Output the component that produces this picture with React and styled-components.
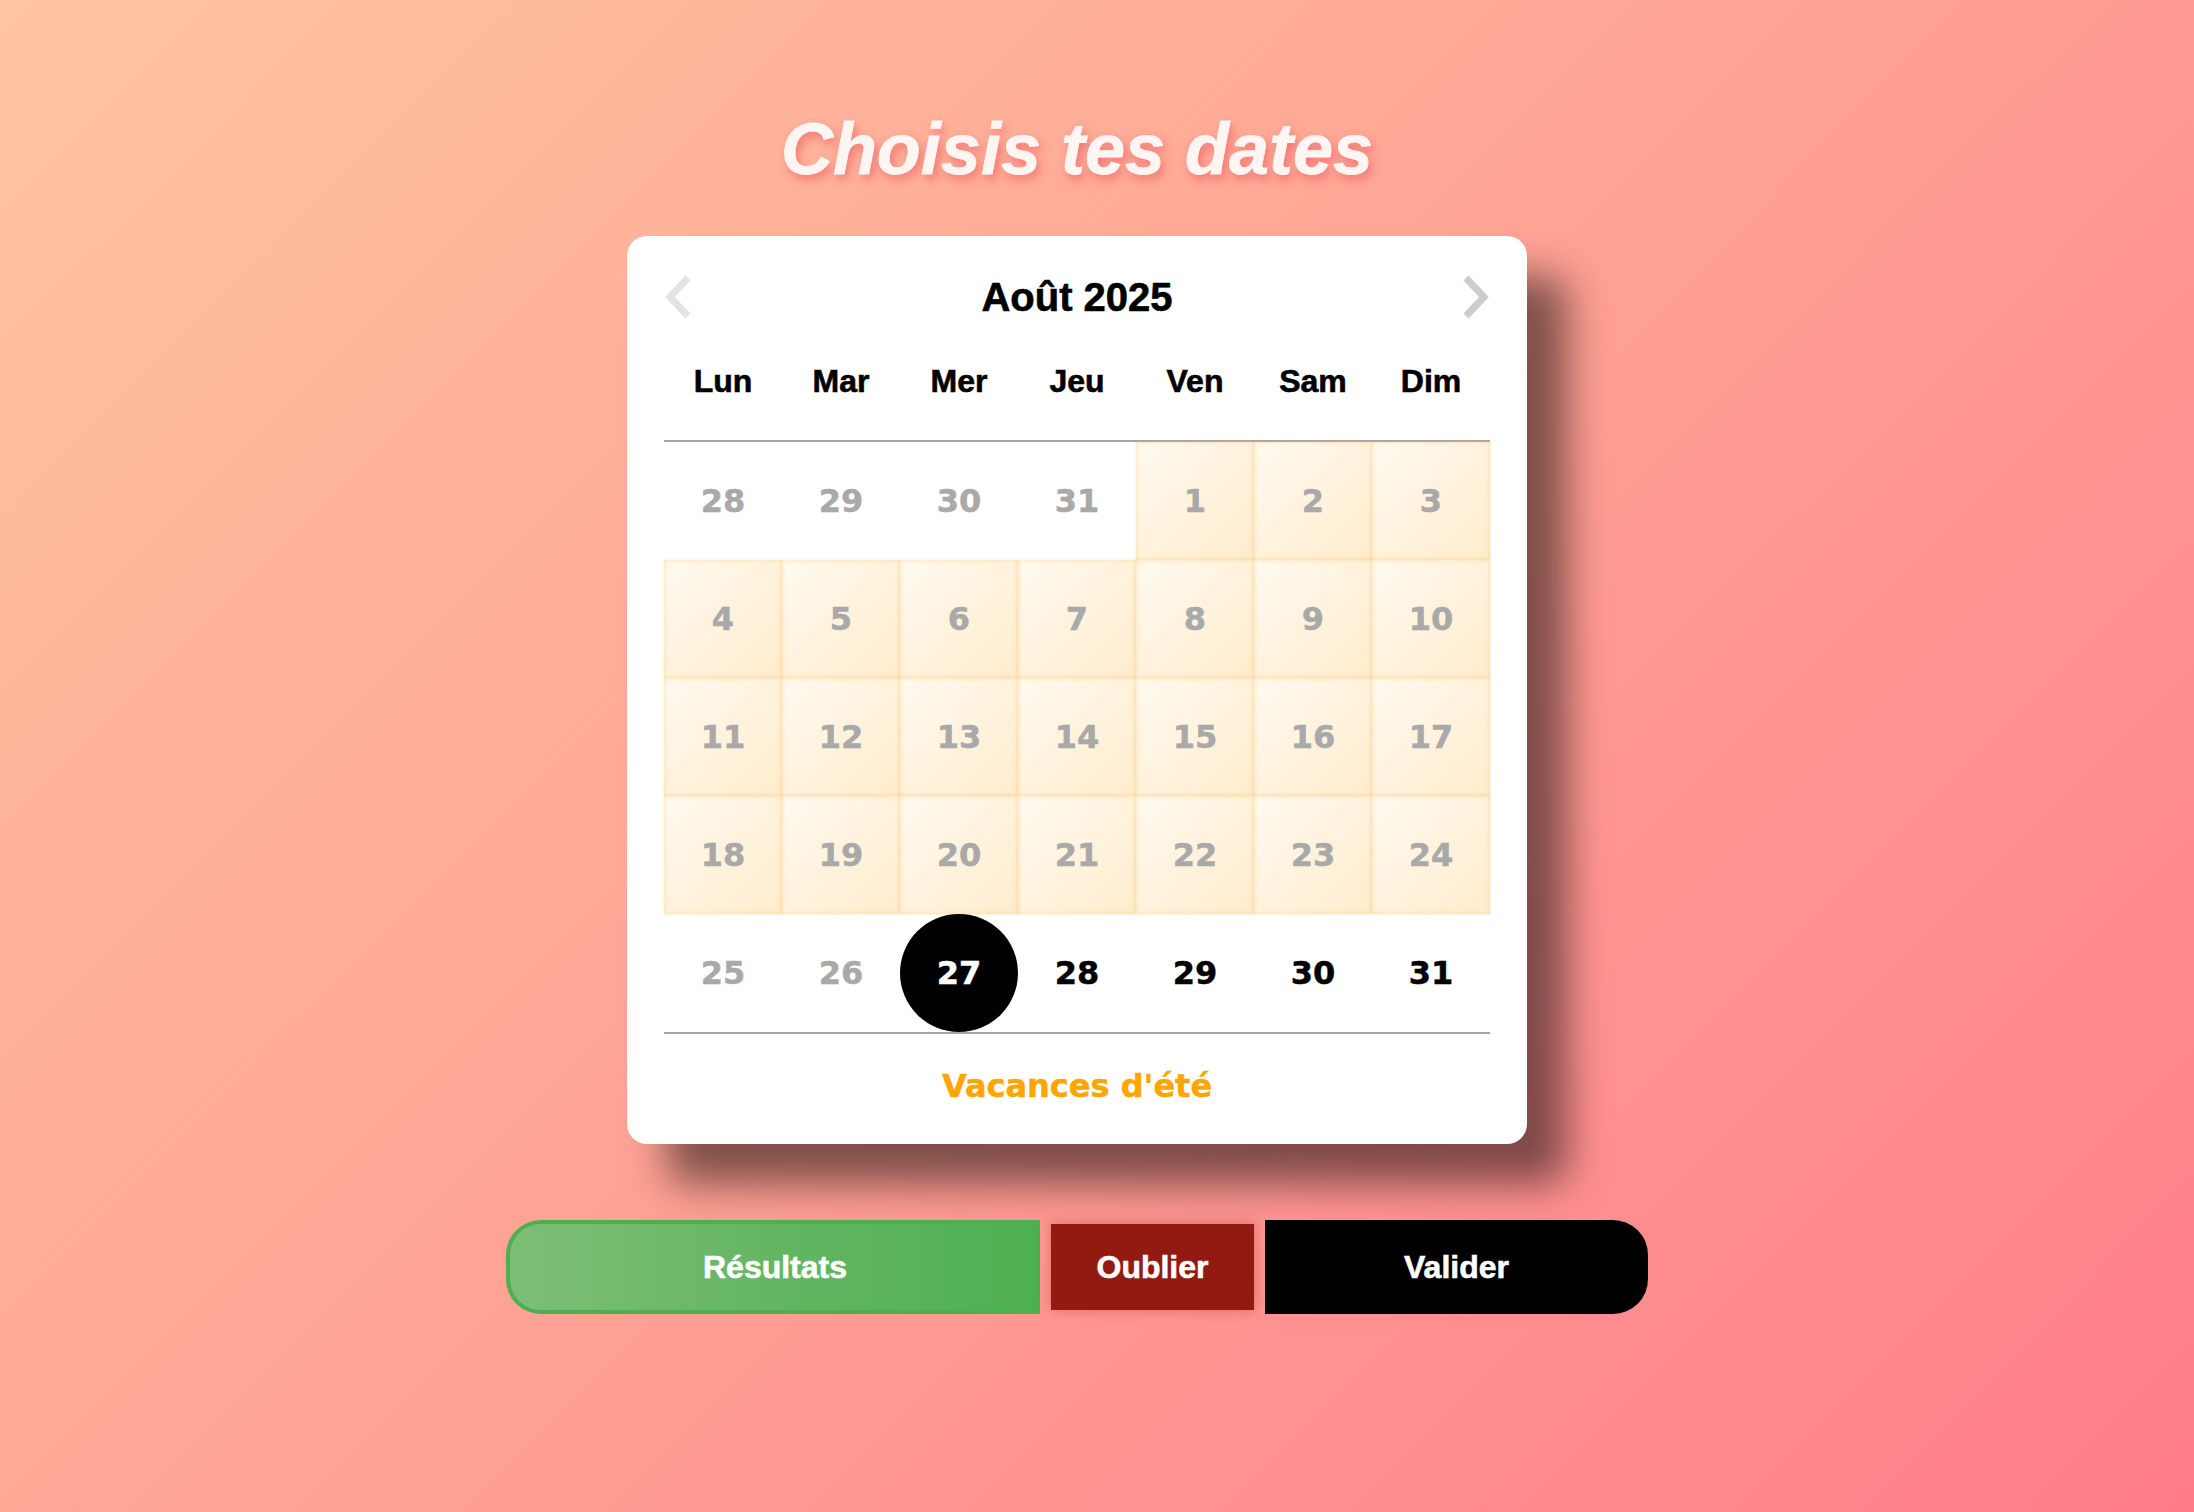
import React from "react"
import styled, { createGlobalStyle } from "styled-components"

const GlobalStyle = createGlobalStyle`
    html, body {
        margin: 0;
        padding: 0;
    }
    body {
        font-family: "Liberation Sans", Arial, sans-serif;
    }
`

const Page = styled.main`
    min-height: 100vh;
    box-sizing: border-box;
    display: flex;
    flex-direction: column;
    align-items: center;
    padding: 107px 40px 80px 0;
    background: linear-gradient(135deg, #ffc4a0 0%, #ffa595 45%, #ff7d8a 100%);
`

const Title = styled.h1`
    margin: 0;
    font-family: "Liberation Sans", Arial, sans-serif;
    font-size: 72px;
    line-height: 84px;
    font-weight: 700;
    font-style: italic;
    color: #fff5f3;
    -webkit-text-stroke: 0.8px #fff5f3;
    text-shadow: 3px 5px 10px rgba(230, 60, 75, 0.5);
`

const Card = styled.section`
    margin-top: 45px;
    width: 900px;
    box-sizing: border-box;
    padding: 36px 37px 39px;
    background: #ffffff;
    border-radius: 20px;
    box-shadow: 40px 40px 40px rgba(0, 0, 0, 0.5);
`

const Header = styled.div`
    height: 50px;
    display: flex;
    align-items: center;
    justify-content: space-between;
`

const NavButton = styled.button`
    border: none;
    background: none;
    padding: 0;
    width: 28px;
    height: 44px;
    display: flex;
    align-items: center;
    justify-content: center;
    color: ${({ $tone }) => $tone};
    cursor: pointer;
`

const Month = styled.h2`
    margin: 0;
    font-family: "Liberation Sans", Arial, sans-serif;
    font-size: 40px;
    font-weight: 700;
    color: #000;
    -webkit-text-stroke: 0.6px #000;
`

const WeekRow = styled.div`
    display: grid;
    grid-template-columns: repeat(7, 118px);
    grid-auto-rows: 118px;
    border-bottom: 2px solid #a4a4a4;
`

const WeekDay = styled.div`
    display: flex;
    align-items: center;
    justify-content: center;
    font-family: "Liberation Sans", Arial, sans-serif;
    font-size: 32px;
    font-weight: 700;
    color: #000;
    -webkit-text-stroke: 0.6px #000;
`

const DayGrid = styled.div`
    display: grid;
    grid-template-columns: repeat(7, 118px);
    grid-auto-rows: 118px;
    border-bottom: 2px solid #a4a4a4;
`

const Day = styled.div`
    display: flex;
    align-items: center;
    justify-content: center;
    font-family: "DejaVu Sans", Verdana, sans-serif;
    font-size: 32px;
    font-weight: 700;
    color: ${({ $muted }) => $muted ? "#a9a9a9" : "#000"};
    -webkit-text-stroke: 0.5px currentColor;
    background: ${({ $range }) => $range ? "linear-gradient(135deg, #fffaf0 0%, #fff2dc 55%, #ffeccc 100%)" : "transparent"};
    box-shadow: ${({ $range }) => $range ? "inset 0 0 4px rgba(255, 196, 110, 0.55), 0 0 3px rgba(255, 205, 140, 0.45)" : "none"};
`

const Selected = styled(Day)`
    background: #000;
    color: #fff;
    border-radius: 50%;
`

const Footer = styled.div`
    padding-top: 33px;
    text-align: center;
    font-family: "DejaVu Sans", Verdana, sans-serif;
    font-size: 32px;
    font-weight: 700;
    color: #ffa500;
    -webkit-text-stroke: 0.5px #ffa500;
`

const Actions = styled.div`
    margin-top: 76px;
    display: flex;
    align-items: center;
    gap: 11px;
`

const ActionButton = styled.button`
    box-sizing: border-box;
    display: flex;
    align-items: center;
    justify-content: center;
    font-family: "Liberation Sans", Arial, sans-serif;
    font-size: 32px;
    font-weight: 700;
    color: #fff;
    -webkit-text-stroke: 0.6px #fff;
    cursor: pointer;
    padding: 0;
`

const ResultButton = styled(ActionButton)`
    width: 534px;
    height: 94px;
    border: 4px solid #4caf50;
    border-right: none;
    border-radius: 35px 0 0 35px;
    background: linear-gradient(90deg, #7dbe77 0%, #64b662 50%, #4caf50 100%);
`

const ForgetButton = styled(ActionButton)`
    width: 203px;
    height: 86px;
    border: none;
    background: #921a10;
    box-shadow: 0 0 12px rgba(150, 30, 30, 0.35);
`

const ConfirmButton = styled(ActionButton)`
    width: 383px;
    height: 94px;
    border: none;
    border-radius: 0 35px 35px 0;
    background: #000;
`

const Chevron = ({ dir }) => (
    <svg width="28" height="44" viewBox="0 0 28 44" fill="none">
        <polyline
            points={ dir === "left" ? "24,3 6,22 24,41" : "4,3 22,22 4,41" }
            stroke="currentColor"
            strokeWidth="7"
            strokeLinejoin="miter"
        />
    </svg>
)

const weekDays = [ "Lun", "Mar", "Mer", "Jeu", "Ven", "Sam", "Dim" ]

// août 2025 commence un vendredi : 4 jours de juillet avant
const days = [
    ...[ 28, 29, 30, 31 ].map(( n ) => ({ n, muted: true, range: false, key: `j${ n }` })),
    ...Array.from({ length: 31 }, ( _, i ) => {
        const n = i + 1
        return { n, muted: n < 27, range: n <= 24, selected: n === 27, key: `a${ n }` }
    }),
]

const App = () => {
    return (
        <>
            <GlobalStyle />
            <Page>
                <Title>Choisis tes dates</Title>
                <Card>
                    <Header>
                        <NavButton $tone="#e3e3e3" aria-label="Mois précédent"><Chevron dir="left" /></NavButton>
                        <Month>Août 2025</Month>
                        <NavButton $tone="#cdcdcd" aria-label="Mois suivant"><Chevron dir="right" /></NavButton>
                    </Header>
                    <WeekRow>
                        { weekDays.map(( d ) => <WeekDay key={ d }>{ d }</WeekDay>) }
                    </WeekRow>
                    <DayGrid>
                        {
                            days.map(( d ) =>
                                d.selected ?
                                <Selected key={ d.key }>{ d.n }</Selected> :
                                <Day key={ d.key } $muted={ d.muted } $range={ d.range }>{ d.n }</Day>
                            )
                        }
                    </DayGrid>
                    <Footer>Vacances d'été</Footer>
                </Card>
                <Actions>
                    <ResultButton>Résultats</ResultButton>
                    <ForgetButton>Oublier</ForgetButton>
                    <ConfirmButton>Valider</ConfirmButton>
                </Actions>
            </Page>
        </>
    )
}

export default App
